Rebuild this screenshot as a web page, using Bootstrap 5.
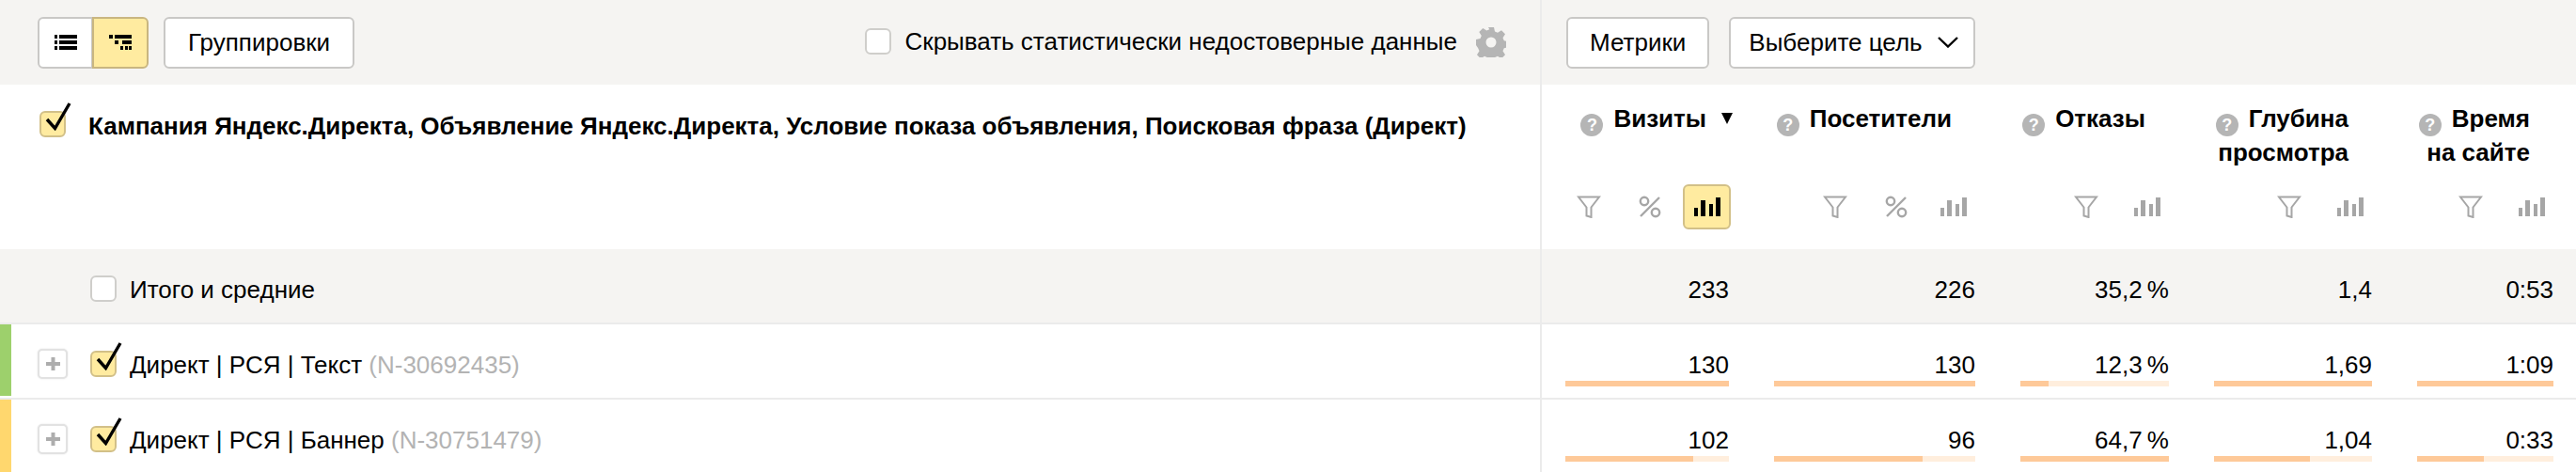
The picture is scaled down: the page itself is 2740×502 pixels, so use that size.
<!DOCTYPE html>
<html lang="ru">
<head>
    <meta charset="UTF-8">
    <meta name="viewport" content="width=device-width, initial-scale=1.0">
    <title>Отчёт Директ</title>
    <link href="https://cdn.jsdelivr.net/npm/bootstrap@5.3.0/dist/css/bootstrap.min.css" rel="stylesheet">
    <style>
        body {
            font-family: "Liberation Sans", Arial, sans-serif;
            font-size: 26px;
            line-height: 34px;
            color: #000;
            background: #fff;
        }
        .report { height: 502px; overflow: hidden; }
        .band { background: #f5f4f2; }
        .line-b { border-bottom: 2px solid #ebebeb; }

        /* left part and five metric columns */
        .side { width: 1640px; flex: none; border-right: 2px solid #ebebeb; }
        .m1 { width: 223px; flex: none; padding-left: 25px !important; }
        .m2 { width: 262px; flex: none; }
        .m3 { width: 206px; flex: none; }
        .m4 { width: 216px; flex: none; }
        .m5 { width: 193px; flex: none; }
        .cell { padding: 0 24px; }

        /* toolbar */
        .toolbar { height: 90px; }
        .toolbar .side { padding: 0 36px 0 40px; }
        .metric-tools { padding-left: 26px; gap: 21px; }
        .btn-ya {
            height: 55px;
            padding: 0 24px;
            font-size: 26px;
            line-height: 30px;
            color: #000;
            background: #fff;
            border: 2px solid #c9c8c6;
            border-radius: 6px;
        }
        .btn-ya:hover { background: #fff; color: #000; border-color: #b5b5b5; }
        .btn-ya.view { width: 59px; padding: 0; }
        .btn-ya.on, .btn-ya.on:hover { background: #ffeba0; border-color: #c9b680; }
        .btn-group > .btn-ya.on { margin-left: -2px; width: 60px; z-index: 1; }
        .btn-ya.metrics { padding: 0 23px; }
        .btn-ya.goal { padding: 0 16px 0 19px; }
        .hide-opt { margin-top: -2px; }
        .hide-label { margin: -2px 0 0 14px; }
        .gear { flex: none; margin-left: 20px; }

        /* check boxes */
        .box {
            position: relative;
            display: block;
            flex: none;
            width: 28px;
            height: 28px;
            background: #fff;
            border: 2px solid #cfcecb;
            border-radius: 6px;
        }
        .box.on { background: #ffeba0; border-color: #d2c088; }
        .box svg { position: absolute; left: 4px; top: -11px; overflow: visible; }

        /* table head */
        .head-row { height: 175px; }
        .head-title { padding: 27px 0 0 42px; font-weight: 700; }
        .head-title .box { margin: 1px 24px 0 0; }
        .m-title {
            height: 106px;
            padding: 19px 25px 0 0;
            font-weight: 700;
            line-height: 35px;
            text-align: right;
            white-space: nowrap;
        }
        .hint {
            display: inline-block;
            width: 24px;
            height: 24px;
            margin-right: 11px;
            border-radius: 50%;
            background: #b5b5b5;
            color: #fff;
            font-size: 18px;
            line-height: 24px;
            font-weight: 700;
            text-align: center;
            vertical-align: -4px;
        }
        .sort-arrow { display: inline-block; margin: 0 -29px 0 16px; vertical-align: 3px; }
        .m-tools { margin-right: -2px; }
        .tool {
            display: flex;
            flex: none;
            align-items: center;
            justify-content: center;
            width: 51px;
            height: 48px;
            padding: 0;
            color: #a6a6a6;
            background: none;
            border: 2px solid transparent;
            border-radius: 6px;
            margin-left: 14px;
        }
        .tool:hover { color: #a6a6a6; background: none; border-color: transparent; }
        .tool.pct { margin-right: -4px; }
        .tool.on, .tool.on:hover { color: #000; background: #ffeba0; border-color: #d2c088; }

        /* rows */
        .data-row { height: 80px; }
        .strip { width: 12px; flex: none; margin-bottom: 2px; }
        .strip-green { background: #9dd06c; }
        .strip-yellow { background: #ffd76e; }
        .name { padding: 26px 0 0 28px; }
        .total-name { padding: 26px 0 0 96px; }
        .name .box, .total-name .box { margin: 2px 14px 0 0; }
        .plus {
            display: flex;
            align-items: center;
            justify-content: center;
            flex: none;
            width: 32px;
            height: 32px;
            margin-right: 24px;
            background: #fff;
            border: 2px solid #e2e2e2;
            border-radius: 5px;
            box-shadow: 0 0 2px #e2e2e2;
            color: #adadad;
        }
        .code { color: #b3b3b3; }
        .num { padding-top: 26px; text-align: right; }
        .total-num { padding-top: 26px; text-align: right; }
        .meter { height: 6px; border-radius: 0; background: #ffeedd; }
        .meter .progress-bar { background: #fec999; }
    </style>
</head>
<body>
    <!-- иконки -->
    <svg class="d-none" xmlns="http://www.w3.org/2000/svg">
        <symbol id="i-filter" viewBox="0 0 26 24">
            <path d="M2 1.500h22L15.500 12.500v10.500l-5-1.500v-9z" fill="none" stroke="currentColor" stroke-width="2"/>
        </symbol>
        <symbol id="i-pct" viewBox="0 0 24 24">
            <circle cx="6" cy="6" r="4.200" fill="none" stroke="currentColor" stroke-width="2.400"/>
            <circle cx="18" cy="18" r="4.200" fill="none" stroke="currentColor" stroke-width="2.400"/>
            <path d="M22 2 2 22" stroke="currentColor" stroke-width="2.400"/>
        </symbol>
        <symbol id="i-bars" viewBox="0 0 28 20">
            <path d="M0 11h4v9H0zM7 3h5v17H7zM16 7h4v13h-4zM23 0h5v20h-5z" fill="currentColor"/>
        </symbol>
        <symbol id="i-check" viewBox="0 0 28 30">
            <path d="M2 18 10.500 27.500 26 1" fill="none" stroke="#000" stroke-width="3.400"/>
        </symbol>
        <symbol id="i-plus" viewBox="0 0 15 14">
            <path d="M5.500 0h4v5H15v4H9.500v5h-4V9H0V5h5.500z" fill="currentColor"/>
        </symbol>
    </svg>

    <div class="report">
        <!-- Панель -->
        <div class="band d-flex toolbar">
            <div class="side d-flex align-items-center">
                <div class="btn-group">
                    <button type="button" class="btn btn-ya view" aria-label="Список">
                        <svg width="24" height="16" viewBox="0 0 24 16" class="d-block mx-auto"><path d="M0 0h3v4H0zM5 0h19v4H5zM0 6h3v4H0zM5 6h19v4H5zM0 12h3v4H0zM5 12h19v4H5z"/></svg>
                    </button>
                    <button type="button" class="btn btn-ya view on" aria-label="Дерево">
                        <svg width="24" height="16" viewBox="0 0 24 16" class="d-block mx-auto"><path d="M0 0h4v4H0zM6 0h18v4H6zM6 6h4v4H6zM14 6h10v4H14zM12 12h3v4h-3zM17 12h3v4h-3zM21 12h3v4h-3z"/></svg>
                    </button>
                </div>
                <button type="button" class="btn btn-ya ms-3">Группировки</button>
                <span class="box ms-auto hide-opt"></span>
                <span class="hide-label">Скрывать статистически недостоверные данные</span>
                <svg class="gear" width="32" height="32" viewBox="0 0 32 32" fill="#b5b5b5">
                    <path fill-rule="evenodd" d="M13 0h6l1 4.500 3 1.300 4-2.500 4 4-2.500 4 1.300 3 4.500 1v6l-4.500 1-1.300 3 2.500 4-4 4-4-2.500-3 1.300-1 4.500h-6l-1-4.500-3-1.300-4 2.500-4-4 2.500-4-1.300-3L0 19v-6l4.500-1 1.300-3-2.500-4 4-4 4 2.500 3-1.300zM16 10.500a5.500 5.500 0 1 0 0 11 5.500 5.500 0 0 0 0-11z"/>
                </svg>
            </div>
            <div class="metric-tools d-flex align-items-center">
                <button type="button" class="btn btn-ya metrics">Метрики</button>
                <button type="button" class="btn btn-ya goal d-flex align-items-center">
                    Выберите цель
                    <svg class="ms-3" width="22" height="12" viewBox="0 0 22 12"><path d="M1 1l10 9.500L21 1" fill="none" stroke="#000" stroke-width="2.400"/></svg>
                </button>
            </div>
        </div>

        <!-- Заголовок таблицы -->
        <div class="d-flex head-row">
            <div class="side head-title d-flex align-items-start">
                <span class="box on"><svg width="28" height="30"><use href="#i-check"/></svg></span>
                <span>Кампания Яндекс.Директа, Объявление Яндекс.Директа, Условие показа объявления, Поисковая фраза (Директ)</span>
            </div>
            <div class="m1 cell">
                <div class="m-title"><span class="hint">?</span>Визиты<span class="sort-arrow"><svg width="12" height="12" viewBox="0 0 12 12" class="d-block"><path d="M0 0h12L6 12z"/></svg></span></div>
                <div class="m-tools d-flex justify-content-end">
                    <button type="button" class="btn tool"><svg width="26" height="24"><use href="#i-filter"/></svg></button>
                    <button type="button" class="btn tool pct"><svg width="24" height="24"><use href="#i-pct"/></svg></button>
                    <button type="button" class="btn tool on"><svg width="28" height="20"><use href="#i-bars"/></svg></button>
                </div>
            </div>
            <div class="m2 cell">
                <div class="m-title"><span class="hint">?</span>Посетители</div>
                <div class="m-tools d-flex justify-content-end">
                    <button type="button" class="btn tool"><svg width="26" height="24"><use href="#i-filter"/></svg></button>
                    <button type="button" class="btn tool pct"><svg width="24" height="24"><use href="#i-pct"/></svg></button>
                    <button type="button" class="btn tool"><svg width="28" height="20"><use href="#i-bars"/></svg></button>
                </div>
            </div>
            <div class="m3 cell">
                <div class="m-title"><span class="hint">?</span>Отказы</div>
                <div class="m-tools d-flex justify-content-end">
                    <button type="button" class="btn tool"><svg width="26" height="24"><use href="#i-filter"/></svg></button>
                    <button type="button" class="btn tool"><svg width="28" height="20"><use href="#i-bars"/></svg></button>
                </div>
            </div>
            <div class="m4 cell">
                <div class="m-title"><span class="hint">?</span>Глубина<br>просмотра</div>
                <div class="m-tools d-flex justify-content-end">
                    <button type="button" class="btn tool"><svg width="26" height="24"><use href="#i-filter"/></svg></button>
                    <button type="button" class="btn tool"><svg width="28" height="20"><use href="#i-bars"/></svg></button>
                </div>
            </div>
            <div class="m5 cell">
                <div class="m-title"><span class="hint">?</span>Время<br>на сайте</div>
                <div class="m-tools d-flex justify-content-end">
                    <button type="button" class="btn tool"><svg width="26" height="24"><use href="#i-filter"/></svg></button>
                    <button type="button" class="btn tool"><svg width="28" height="20"><use href="#i-bars"/></svg></button>
                </div>
            </div>
        </div>

        <!-- Итого -->
        <div class="d-flex data-row band line-b">
            <div class="side total-name d-flex align-items-start">
                <span class="box"></span>
                <span>Итого и средние</span>
            </div>
            <div class="m1 cell total-num">233</div>
            <div class="m2 cell total-num">226</div>
            <div class="m3 cell total-num">35,2&thinsp;%</div>
            <div class="m4 cell total-num">1,4</div>
            <div class="m5 cell total-num">0:53</div>
        </div>

        <!-- Строки -->
        <div class="d-flex data-row line-b">
            <div class="side d-flex">
                <div class="strip strip-green"></div>
                <div class="name d-flex align-items-start">
                    <span class="plus"><svg width="15" height="14"><use href="#i-plus"/></svg></span>
                    <span class="box on"><svg width="28" height="30"><use href="#i-check"/></svg></span>
                    <span>Директ | РСЯ | Текст <span class="code">(N-30692435)</span></span>
                </div>
            </div>
            <div class="m1 cell num">130<div class="progress meter"><div class="progress-bar" style="width: 100%"></div></div></div>
            <div class="m2 cell num">130<div class="progress meter"><div class="progress-bar" style="width: 100%"></div></div></div>
            <div class="m3 cell num">12,3&thinsp;%<div class="progress meter"><div class="progress-bar" style="width: 19%"></div></div></div>
            <div class="m4 cell num">1,69<div class="progress meter"><div class="progress-bar" style="width: 100%"></div></div></div>
            <div class="m5 cell num">1:09<div class="progress meter"><div class="progress-bar" style="width: 100%"></div></div></div>
        </div>
        <div class="d-flex data-row">
            <div class="side d-flex">
                <div class="strip strip-yellow"></div>
                <div class="name d-flex align-items-start">
                    <span class="plus"><svg width="15" height="14"><use href="#i-plus"/></svg></span>
                    <span class="box on"><svg width="28" height="30"><use href="#i-check"/></svg></span>
                    <span>Директ | РСЯ | Баннер <span class="code">(N-30751479)</span></span>
                </div>
            </div>
            <div class="m1 cell num">102<div class="progress meter"><div class="progress-bar" style="width: 78%"></div></div></div>
            <div class="m2 cell num">96<div class="progress meter"><div class="progress-bar" style="width: 74%"></div></div></div>
            <div class="m3 cell num">64,7&thinsp;%<div class="progress meter"><div class="progress-bar" style="width: 100%"></div></div></div>
            <div class="m4 cell num">1,04<div class="progress meter"><div class="progress-bar" style="width: 61%"></div></div></div>
            <div class="m5 cell num">0:33<div class="progress meter"><div class="progress-bar" style="width: 49%"></div></div></div>
        </div>
    </div>

    <script src="https://cdn.jsdelivr.net/npm/bootstrap@5.3.0/dist/js/bootstrap.bundle.min.js"></script>
</body>
</html>
